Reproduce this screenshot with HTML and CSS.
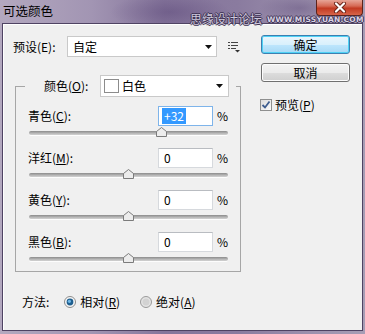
FILE: index.html
```html
<!DOCTYPE html>
<html lang="zh-CN">
<head>
    <meta charset="UTF-8">
    <title>可选颜色</title>
    <link rel="stylesheet" href="styles.css">
</head>
<body>
    <div class="window">
        <div class="titlebar">
            <span class="title">可选颜色</span>
            <span class="watermark"><span class="wm-cn">思缘设计论坛</span><span class="wm-en">WWW.MISSYUAN.COM</span></span>
            <span class="close">
                <svg width="14" height="11" viewBox="0 0 14 11"><path d="M3 1.5L11 9.5M11 1.5L3 9.5" stroke="#6a2418" stroke-width="4" stroke-linecap="round"/><path d="M3 1.5L11 9.5M11 1.5L3 9.5" stroke="#fff" stroke-width="2.2" stroke-linecap="round"/></svg>
            </span>
        </div>

        <div class="client">
            <div class="main">
                <div class="preset-row">
                    <span class="preset-label">预设(E):</span>
                    <div class="select preset-select">
                        <span>自定</span>
                        <svg class="arrow" width="7" height="4" viewBox="0 0 7 4"><path d="M0 0H7L3.5 4Z" fill="#111"/></svg>
                    </div>
                    <!-- preset menu icon -->
                    <svg class="list-icon" width="13" height="12" viewBox="0 0 13 12">
                        <rect x="0" y="1" width="2" height="1" fill="#444"/>
                        <rect x="3" y="1" width="7" height="1" fill="#444"/>
                        <rect x="0" y="4" width="2" height="1" fill="#444"/>
                        <rect x="3" y="4" width="7" height="1" fill="#444"/>
                        <rect x="0" y="7" width="2" height="1" fill="#444"/>
                        <rect x="3" y="7" width="5" height="1" fill="#444"/>
                        <path d="M7 9H12L9.5 11.5Z" fill="#333"/>
                    </svg>
                </div>

                <fieldset class="group">
                    <legend class="group-head">
                        <span class="group-label">颜色(<u>O</u>):</span>
                        <div class="select color-select">
                            <span class="swatch"></span>
                            <span>白色</span>
                            <svg class="arrow" width="7" height="4" viewBox="0 0 7 4"><path d="M0 0H7L3.5 4Z" fill="#111"/></svg>
                        </div>
                    </legend>

                    <div class="slider-row">
                        <div class="line">
                            <span class="row-label">青色(<u>C</u>):</span>
                            <div class="input focused"><span class="selected">+32</span></div>
                            <span class="pct">%</span>
                        </div>
                        <div class="slider">
                            <div class="track"></div>
                            <svg class="thumb" style="left: 128px" width="11" height="10" viewBox="0 0 11 10"><path d="M5.5 0.5L10.5 4.5V9.5H0.5V4.5Z" fill="#ececec" stroke="#7b7b7b"/></svg>
                        </div>
                    </div>

                    <div class="slider-row">
                        <div class="line">
                            <span class="row-label">洋红(<u>M</u>):</span>
                            <div class="input">0</div>
                            <span class="pct">%</span>
                        </div>
                        <div class="slider">
                            <div class="track"></div>
                            <svg class="thumb" style="left: 95px" width="11" height="10" viewBox="0 0 11 10"><path d="M5.5 0.5L10.5 4.5V9.5H0.5V4.5Z" fill="#ececec" stroke="#7b7b7b"/></svg>
                        </div>
                    </div>

                    <div class="slider-row">
                        <div class="line">
                            <span class="row-label">黄色(<u>Y</u>):</span>
                            <div class="input">0</div>
                            <span class="pct">%</span>
                        </div>
                        <div class="slider">
                            <div class="track"></div>
                            <svg class="thumb" style="left: 95px" width="11" height="10" viewBox="0 0 11 10"><path d="M5.5 0.5L10.5 4.5V9.5H0.5V4.5Z" fill="#ececec" stroke="#7b7b7b"/></svg>
                        </div>
                    </div>

                    <div class="slider-row">
                        <div class="line">
                            <span class="row-label">黑色(<u>B</u>):</span>
                            <div class="input">0</div>
                            <span class="pct">%</span>
                        </div>
                        <div class="slider">
                            <div class="track"></div>
                            <svg class="thumb" style="left: 95px" width="11" height="10" viewBox="0 0 11 10"><path d="M5.5 0.5L10.5 4.5V9.5H0.5V4.5Z" fill="#ececec" stroke="#7b7b7b"/></svg>
                        </div>
                    </div>
                </fieldset>

                <div class="method-row">
                    <span>方法:</span>
                    <span class="radio-item first">
                        <svg width="12" height="12" viewBox="0 0 12 12">
                            <circle cx="6" cy="6" r="5.5" fill="#f6f6f6" stroke="#8c8c8c"/>
                            <circle cx="6" cy="6" r="3.4" fill="#1f5f8f"/>
                            <circle cx="5.4" cy="5.3" r="1.6" fill="#6fb8e8"/>
                        </svg>
                        <span>相对(<u>R</u>)</span>
                    </span>
                    <span class="radio-item">
                        <svg width="12" height="12" viewBox="0 0 12 12">
                            <circle cx="6" cy="6" r="5.5" fill="#e4e4e4" stroke="#9a9a9a"/>
                            <circle cx="6" cy="6" r="3.5" fill="#d2d2d2"/>
                        </svg>
                        <span>绝对(<u>A</u>)</span>
                    </span>
                </div>
            </div>

            <div class="side">
                <div class="btn btn-default">确定</div>
                <div class="btn">取消</div>
                <div class="check">
                    <span class="box">
                        <svg width="10" height="10" viewBox="0 0 10 10"><path d="M1.5 5L4 7.5L8.5 1.5" fill="none" stroke="#3d5d8f" stroke-width="1.8"/></svg>
                    </span>
                    <span>预览(<u>P</u>)</span>
                </div>
            </div>
        </div>
    </div>
</body>
</html>
```

FILE: styles.css
```css
* {
    box-sizing: border-box;
}

body {
    margin: 0;
    font-family: "Noto Sans CJK SC", "Microsoft YaHei", sans-serif;
    font-size: 12px;
    line-height: 16px;
    color: #000;
    background: #fff;
}

u {
    text-underline-offset: 1px;
}

/* Window frame */
.window {
    position: relative;
    width: 365px;
    height: 334px;
    display: flex;
    flex-direction: column;
    padding: 0 2px 3px 2px;
    background:
        radial-gradient(ellipse 60px 18px at 170px 12px, rgba(90, 70, 120, 0.45), transparent),
        radial-gradient(ellipse 40px 14px at 300px 8px, rgba(80, 60, 110, 0.35), transparent),
        linear-gradient(90deg, #b3a8bf 0%, #a295b3 25%, #85759b 45%, #8a7b9f 65%, #9c90ad 85%, #a79db5 100%);
}

.titlebar {
    height: 23px;
    display: flex;
    align-items: flex-start;
}

.title {
    padding: 3px 0 0 1px;
    font-size: 12.5px;
    line-height: 15px;
}

/* watermark sits over the title bar and close button */
.watermark {
    position: absolute;
    z-index: 1;
    left: 190px;
    top: 9px;
    display: flex;
    align-items: center;
    gap: 5px;
    white-space: nowrap;
    color: #d9d2e4;
    text-shadow: 1px 0 0 #3d3252, -1px 0 0 #3d3252, 0 1px 0 #3d3252, 0 -1px 0 #3d3252;
}

.wm-cn {
    font-size: 12px;
    line-height: 14px;
    color: #cfc8dc;
}

.wm-en {
    font-family: "DejaVu Sans", sans-serif;
    font-size: 7.5px;
    font-weight: bold;
    letter-spacing: 0.2px;
    padding-top: 3px;
}

.close {
    margin-left: auto;
    width: 47px;
    height: 16px;
    display: flex;
    align-items: center;
    justify-content: center;
    border: 1px solid #5c231a;
    border-top: none;
    border-radius: 0 0 4px 4px;
    background: linear-gradient(180deg, #e7a597 0%, #d66a55 40%, #c23a22 55%, #d76449 100%);
}

/* Dialog body */
.client {
    flex: 1;
    display: flex;
    padding: 12px 11px 0 10px;
    background: #f0f0f0;
    border: 1px solid #4f4363;
    box-shadow: inset 1px 1px 0 #fff;
}

.main {
    width: 232px;
    display: flex;
    flex-direction: column;
}

.side {
    width: 89px;
    margin-left: 16px;
    display: flex;
    flex-direction: column;
}

.preset-row {
    display: flex;
    align-items: center;
    height: 21px;
}

.preset-label {
    width: 54px;
}

.select {
    display: flex;
    align-items: center;
    background: #fff;
    border: 1px solid #c9c9c9;
}

.select .arrow {
    margin-left: auto;
}

.preset-select {
    width: 150px;
    height: 21px;
    padding-left: 5px;
}

.preset-select .arrow {
    margin-right: 4px;
}

.list-icon {
    margin-left: 11px;
}

/* Group box */
.group {
    margin: 18px 0 0 2px;
    width: 226px;
    padding: 9px 12px 4px 12px;
    border: 1px solid #a6a6a6;
    min-inline-size: 0;
}

.group-head {
    display: flex;
    align-items: center;
    margin-left: -3px;
    padding: 0 7px 0 19px;
}

.group-label {
    width: 56px;
}

.color-select {
    width: 129px;
    height: 22px;
    padding-left: 3px;
}

.color-select .arrow {
    margin-right: 5px;
}

.swatch {
    width: 15px;
    height: 14px;
    border: 1px solid #8c8c8c;
    background: #fff;
    margin-right: 3px;
}

.slider-row + .slider-row {
    margin-top: 7px;
}

.line {
    display: flex;
    align-items: center;
    height: 20px;
}

.row-label {
    flex: 1;
}

.input {
    width: 55px;
    height: 20px;
    padding-left: 5px;
    background: #fff;
    border: 1px solid #d6d9dd;
    border-top-color: #b9bcc1;
    line-height: 18px;
}

.input.focused {
    padding-left: 3px;
    border-color: #7eb4ea;
}

.selected {
    display: inline-block;
    margin-top: 1px;
    padding: 0 2px;
    line-height: 16px;
    background: #3399ff;
    color: #fff;
}

.pct {
    width: 15px;
    text-align: right;
}

.slider {
    position: relative;
    height: 15px;
}

.track {
    position: absolute;
    left: 1px;
    right: 0;
    top: 5px;
    height: 4px;
    border-radius: 2px;
    background: linear-gradient(180deg, #8b8b8b, #b9b9b9 60%, #d3d3d3);
    box-shadow: 0 1px 0 #fdfdfd;
}

.thumb {
    position: absolute;
    top: 1px;
}

/* Method radios */
.method-row {
    display: flex;
    align-items: center;
    height: 16px;
    margin-top: 22px;
    padding-left: 9px;
}

.radio-item {
    display: flex;
    align-items: center;
    gap: 4px;
    margin-left: 20px;
}

.radio-item.first {
    margin-left: 15px;
}

/* Buttons */
.btn {
    height: 19px;
    border: 1px solid #707070;
    border-radius: 3px;
    background: linear-gradient(180deg, #f3f3f3 0%, #ebebeb 50%, #dddddd 51%, #cfcfcf 100%);
    box-shadow: inset 0 0 0 1px #fcfcfc;
    text-align: center;
    line-height: 17px;
}

.btn + .btn {
    margin-top: 9px;
}

.btn-default {
    margin-top: -1px;
    border-color: #3c7fb1;
    background: linear-gradient(180deg, #eaf6fd 0%, #d9f0fc 50%, #bee6fd 51%, #a7d9f5 100%);
    box-shadow: inset 0 0 0 1px #4fd2f5;
}

.check {
    display: flex;
    align-items: center;
    gap: 3px;
    margin-top: 15px;
    margin-left: -1px;
}

.box {
    width: 12px;
    height: 12px;
    display: flex;
    align-items: center;
    justify-content: center;
    border: 1px solid #8e8f8f;
    background: linear-gradient(135deg, #dcdcdc, #fbfbfb);
}
```
